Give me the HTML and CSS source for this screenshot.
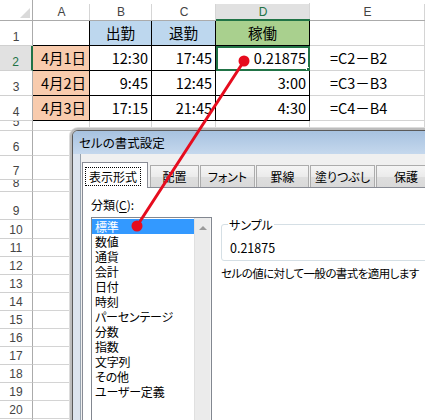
FILE: index.html
```html
<!DOCTYPE html>
<html lang="ja">
<head>
<meta charset="utf-8">
<title>セルの書式設定</title>
<link rel="stylesheet" href="styles.css">
</head>
<body>
<div class="page">
  <div class="sheet">
    <div class="corner"><svg width="10" height="10" viewBox="0 0 10 10"><polygon points="10,0 10,10 0,10" fill="#dadada"/></svg></div>
    <div class="ch">A</div><div class="ch">B</div><div class="ch">C</div><div class="ch ch-sel">D</div><div class="ch">E</div>

    <div class="rh">1</div><div class="c a1"></div><div class="c bx hd blue">出勤</div><div class="c bx hd blue">退勤</div><div class="c bx hd green">稼働</div><div class="c"></div>
    <div class="rh rh-sel">2</div><div class="c bx date">4月1日</div><div class="c bx num">12:30</div><div class="c bx num">17:45</div><div class="c bx num sel">0.21875</div><div class="c f">=C2－B2</div>
    <div class="rh">3</div><div class="c bx date">4月2日</div><div class="c bx num">9:45</div><div class="c bx num">12:45</div><div class="c bx num">3:00</div><div class="c f">=C3－B3</div>
    <div class="rh">4</div><div class="c bx date">4月3日</div><div class="c bx num">17:15</div><div class="c bx num">21:45</div><div class="c bx num">4:30</div><div class="c f">=C4－B4</div>
    <div class="rh">5</div><div class="c"></div><div class="c"></div><div class="c"></div><div class="c"></div><div class="c"></div>
    <div class="rh">6</div><div class="c"></div><div class="fill"></div>
    <div class="rh">7</div><div class="c"></div><div class="fill"></div>
    <div class="rh">8</div><div class="c"></div><div class="fill"></div>
    <div class="rh">9</div><div class="c"></div><div class="fill"></div>
    <div class="rh">10</div><div class="c"></div><div class="fill"></div>
    <div class="rh">11</div><div class="c"></div><div class="fill"></div>
    <div class="rh">12</div><div class="c"></div><div class="fill"></div>
    <div class="rh">13</div><div class="c"></div><div class="fill"></div>
    <div class="rh">14</div><div class="c"></div><div class="fill"></div>
    <div class="rh">15</div><div class="c"></div><div class="fill"></div>
    <div class="rh">16</div><div class="c"></div><div class="fill"></div>
    <div class="rh">17</div><div class="c"></div><div class="fill"></div>
    <div class="rh">18</div><div class="c"></div><div class="fill"></div>
    <div class="rh">19</div><div class="c"></div><div class="fill"></div>
    <div class="rh">20</div><div class="c"></div><div class="fill"></div>
    <div class="rh"></div><div class="c"></div><div class="fill"></div>
  </div>

  <div class="dlg">
    <div class="title">セルの書式設定</div>
    <div class="frame">
      <div class="client">
        <div class="tabs">
          <div class="tab tab-on"><span class="focus">表示形式</span></div>
          <div class="tab w49">配置</div>
          <div class="tab w55">フォント</div>
          <div class="tab w53">罫線</div>
          <div class="tab w65">塗りつぶし</div>
          <div class="tab w60">保護</div>
        </div>
        <div class="tabpage">
          <div class="lbl">分類(<u>C</u>):</div>
          <div class="row">
            <div class="listbox">
              <div class="items">
                <div class="item on">標準</div>
                <div class="item">数値</div>
                <div class="item">通貨</div>
                <div class="item">会計</div>
                <div class="item">日付</div>
                <div class="item">時刻</div>
                <div class="item">パーセンテージ</div>
                <div class="item">分数</div>
                <div class="item">指数</div>
                <div class="item">文字列</div>
                <div class="item">その他</div>
                <div class="item">ユーザー定義</div>
              </div>
              <div class="sbar"><div class="sbtn"><span class="arrow"></span></div></div>
            </div>
            <div class="right">
              <fieldset class="sample">
                <legend>サンプル</legend>
                <div class="sval">0.21875</div>
              </fieldset>
              <div class="desc">セルの値に対して一般の書式を適用します</div>
            </div>
          </div>
        </div>
      </div>
    </div>
  </div>

  <svg class="pointer" width="425" height="420" viewBox="0 0 425 420">
    <line x1="244" y1="61" x2="137" y2="226" stroke="#e60c1e" stroke-width="3" stroke-linecap="round"/>
    <circle cx="244" cy="61" r="5.5" fill="#e60c1e"/>
    <circle cx="137" cy="226" r="5.5" fill="#e60c1e"/>
  </svg>
</div>
</body>
</html>
```

FILE: styles.css
```css
* { box-sizing: border-box; margin: 0; padding: 0; }
html, body { width: 425px; height: 420px; overflow: hidden; background: #fff; }
body { font-family: "Noto Sans CJK JP", "Liberation Sans", sans-serif; color: #000; }

.page { position: relative; width: 425px; height: 420px; overflow: hidden; }

/* ---------- sheet ---------- */
.sheet {
  display: grid;
  grid-template-columns: 33px 57px 62px 64px 94px 115px;
  grid-template-rows: 21px 25px 25px 25px 25px 10px 25px 24px 12px 28px 19px repeat(11, 18px);
}
.corner {
  border-right: 1px solid #ababab;
  border-bottom: 1px solid #ababab;
  display: flex; justify-content: flex-end; align-items: flex-end;
  padding: 0 2px 2px 0;
}
.corner svg { display: block; }
.ch {
  font: 12px "Liberation Sans", sans-serif;
  color: #444;
  display: flex; align-items: center; justify-content: center;
  padding-top: 3px;
  border-bottom: 1px solid #ababab;
  background: linear-gradient(#d5d5d5, #d5d5d5) right bottom / 1px 16px no-repeat, #fff;
}
.ch-sel {
  color: #217346;
  border-bottom: 2px solid #217346;
  padding-top: 4px;
  background: linear-gradient(#d5d5d5, #d5d5d5) right bottom / 1px 16px no-repeat,
              linear-gradient(#fff 4px, #e1e1e1 4px);
}
.rh {
  font: 12px/13px "Liberation Sans", sans-serif;
  color: #444;
  display: flex; align-items: flex-end; justify-content: center;
  border-right: 1px solid #ababab;
  border-bottom: 1px solid #d0d0d0;
  overflow: hidden;
  padding-bottom: 1px;
}
.rh-sel { background: #e1e1e1; color: #217346; border-right: 2px solid #217346; }

.c {
  border-right: 1px solid #d4d4d4;
  border-bottom: 1px solid #d4d4d4;
  font-size: 14.5px; line-height: 18px;
  display: flex; align-items: flex-end;
  padding: 0 3px 3px 3px;
  overflow: hidden; white-space: nowrap;
}
.fill { grid-column: 3 / -1; }
.a1 { border-right-color: #000; border-bottom-color: #000; }
.bx { border-right-color: #000; border-bottom-color: #000; }
.hd { justify-content: center; }
.blue { background: #bdd7ee; }
.green { background: #a9d08e; }
.date { background: #f8cbad; justify-content: flex-end; }
.num { justify-content: flex-end; }
.f { padding-left: 20px; }
.sel { position: relative; outline: 2px solid #217346; outline-offset: -2px; }
.sel::after {
  content: ""; position: absolute; right: -3px; bottom: -3px;
  width: 5px; height: 5px; background: #217346; box-shadow: 0 0 0 1px #fff;
}

/* ---------- dialog ---------- */
.dlg {
  position: absolute; left: 72px; top: 130px;
  width: 380px; height: 300px;
  border: 1px solid #5a5a5a;
  border-radius: 6px 0 0 0;
  box-shadow: 0 0 0 2px #bcbcbc, 0 0 0 3px #dcdcdc;
  background: #dce4ee;
  display: flex; flex-direction: column;
  font-size: 12px;
  font-feature-settings: "palt";
}
.title {
  flex: none; height: 23px;
  padding-left: 6px;
  display: flex; align-items: center;
  font-size: 12.5px;
  background: linear-gradient(#a7c2e0, #c5d8ed);
  border-radius: 5px 0 0 0;
}
.frame { flex: 1; padding-left: 7px; display: flex; }
.client {
  flex: 1;
  background: #f0f0f0;
  border-left: 1px solid #98a3af;
  padding-top: 8px;
  display: flex; flex-direction: column;
}
.tabs {
  display: flex; align-items: flex-end;
  height: 25px; padding-left: 1px;
  position: relative; z-index: 1;
}
.tab {
  height: 22px;
  margin-left: 1px;
  border: 1px solid #acacac; border-bottom: none;
  background: linear-gradient(#f5f5f5, #ebebeb 50%, #dedede 51%, #d9d9d9);
  display: flex; align-items: center; justify-content: center;
  white-space: nowrap;
}
.tab-on {
  width: 66px; height: 26px; margin-left: 0; margin-bottom: -1px;
  background: #fff; border-color: #898c95;
  align-items: flex-start; justify-content: flex-start;
  padding: 4px 0 0 2px;
}
.focus {
  width: 56px; height: 19px;
  border: 1px dotted #000;
  display: flex; align-items: center; justify-content: center;
}
.tab-on + .tab { margin-left: 2px; }
.w49 { width: 49px; }
.w55 { width: 55px; }
.w53 { width: 53px; }
.w65 { width: 65px; }
.w60 { width: 60px; }

.tabpage {
  flex: 1;
  margin-left: 1px;
  background: #fff;
  border-top: 1px solid #898c95;
  border-left: 1px solid #898c95;
  padding: 9px 0 0 8px;
}
.lbl { line-height: 15px; }
.lbl u { text-decoration-thickness: 1px; text-underline-offset: 2px; }
.row { display: flex; margin-top: 5px; }
.listbox {
  flex: none; width: 121px; height: 240px;
  border: 1px solid #828790;
  display: flex;
}
.items { flex: 1; padding: 1px 0 0 0; }
.item { line-height: 15px; height: 15px; padding-left: 3px; white-space: nowrap; letter-spacing: -0.2px; }
.item.on { background: #3399ff; color: #fff; }
.sbar {
  flex: none; width: 17px;
  background: #ebebeb;
  border-left: 1px solid #e0e0e0;
  border-right: 1px solid #f4f4f4;
}
.sbtn { height: 17px; display: flex; align-items: center; justify-content: center; padding-top: 3px; }
.arrow {
  width: 0; height: 0;
  border-left: 4px solid transparent;
  border-right: 4px solid transparent;
  border-bottom: 4px solid #9a9a9a;
}
.right { flex: none; width: 240px; margin-left: 9px; }
.sample {
  border: 1px solid #d5dfe5;
  border-radius: 3px;
  padding: 8px 0 5px 8px;
  min-width: 0;
}
.sample legend {
  line-height: 15px;
  padding: 0 1px;
  margin-left: -2px;
}
.sval { line-height: 15px; font-size: 12.5px; }
.desc { margin-top: 5px; line-height: 15px; white-space: nowrap; font-size: 11.5px; letter-spacing: -0.55px; }

.pointer { position: absolute; left: 0; top: 0; pointer-events: none; z-index: 5; }
```
